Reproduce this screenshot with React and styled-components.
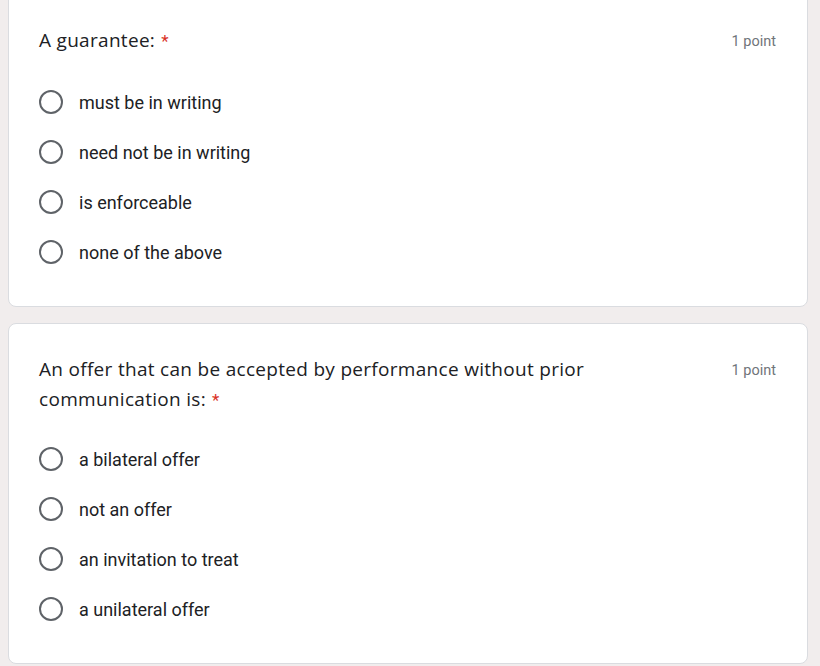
import React from 'react';
import styled, { createGlobalStyle } from 'styled-components';

const GlobalStyle = createGlobalStyle`
  html, body {
    margin: 0;
    padding: 0;
    background-color: #f1eded;
    overflow: hidden;
  }
`;

const PageWrapper = styled.div`
  display: flex;
  flex-direction: column;
  gap: 16px;
  padding: 0 12px 0 8px;
  margin-top: -12px;
  min-height: 100vh;
  background-color: #f1eded;
`;

const Card = styled.div`
  display: flex;
  flex-direction: column;
  width: 800px;
  box-sizing: border-box;
  background-color: #fff;
  border: 1px solid #dadce0;
  border-radius: 8px;
  padding: ${(p) => p.$top}px 30px 29px 30px;
`;

const QuestionHead = styled.div`
  display: flex;
  justify-content: space-between;
  align-items: flex-start;
  margin-bottom: ${(p) => p.$gap}px;
`;

const QuestionTitle = styled.div`
  font-family: 'Open Sans', Lato, sans-serif;
  font-size: 19px;
  letter-spacing: 0.3px;
  line-height: 30px;
  color: #202124;
  max-width: 580px;
`;

const Required = styled.span`
  font-family: Roboto, 'Liberation Sans', sans-serif;
  font-size: 17px;
  line-height: 1;
  letter-spacing: 0;
  color: #d93025;
  margin-left: 6px;
`;

const Points = styled.div`
  font-family: Roboto, 'Liberation Sans', sans-serif;
  font-size: 14.5px;
  line-height: 30px;
  color: #70757a;
  margin: 2px 1px -2px 0;
  flex-shrink: 0;
`;

const OptionList = styled.div`
  display: flex;
  flex-direction: column;
`;

const Option = styled.label`
  display: flex;
  align-items: center;
  height: 50px;
  gap: 16px;
  cursor: pointer;
`;

const Radio = styled.span`
  width: 24px;
  height: 24px;
  box-sizing: border-box;
  border: 2.5px solid #5f6368;
  border-radius: 50%;
  flex-shrink: 0;
`;

const OptionText = styled.span`
  font-family: Roboto, 'Liberation Sans', sans-serif;
  font-size: 18px;
  color: #202124;
`;

const questions = [
  {
    title: 'A guarantee:',
    top: 36,
    gap: 22,
    options: ['must be in writing', 'need not be in writing', 'is enforceable', 'none of the above'],
  },
  {
    title: 'An offer that can be accepted by performance without prior communication is:',
    top: 30,
    gap: 20,
    options: ['a bilateral offer', 'not an offer', 'an invitation to treat', 'a unilateral offer'],
  },
];

const App = () => {
  return (
    <>
      <GlobalStyle />
      <PageWrapper>
        {questions.map((q) => (
          <Card key={q.title} $top={q.top}>
            <QuestionHead $gap={q.gap}>
              <QuestionTitle>
                {q.title}
                <Required>*</Required>
              </QuestionTitle>
              <Points>1 point</Points>
            </QuestionHead>
            <OptionList>
              {q.options.map((o) => (
                <Option key={o}>
                  <Radio />
                  <OptionText>{o}</OptionText>
                </Option>
              ))}
            </OptionList>
          </Card>
        ))}
      </PageWrapper>
    </>
  );
};

export default App;
